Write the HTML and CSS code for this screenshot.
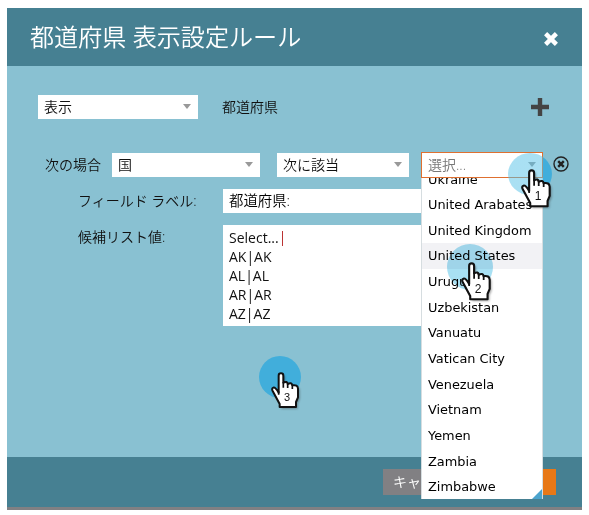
FILE: index.html
```html
<!DOCTYPE html>
<html lang="ja">
<head>
<meta charset="utf-8">
<title>都道府県 表示設定ルール</title>
<link rel="stylesheet" href="styles.css">
</head>
<body>
<svg class="defs" width="0" height="0">
  <symbol id="hand" viewBox="0 0 96 120">
    <path class="hand-shadow" d="M23 62V11Q23 4 30 4T37 11V32Q49 26 50 36Q62 30 64 40Q80 37 81 50V76L75 90V105H26V96L5 57Q1 49 7 47T23 62Z"/>
    <path class="hand-shape" d="M23 62V11Q23 4 30 4T37 11V32Q49 26 50 36Q62 30 64 40Q80 37 81 50V76L75 90V105H26V96L5 57Q1 49 7 47T23 62Z"/>
    <path class="hand-line" d="M23 58V68M37 30V47M50 34V48M64 39V51"/>
  </symbol>
</svg>
<main class="dialog">
  <header class="head">
    <h1>都道府県 表示設定ルール</h1>
    <svg class="close" viewBox="0 0 16 16"><path d="M2.6 2.6 13.4 13.4M13.4 2.6 2.6 13.4"/></svg>
  </header>
  <section class="body">
    <div class="row action">
      <div class="select show">表示<i></i></div>
      <span class="target">都道府県</span>
      <svg class="add" viewBox="0 0 18 18"><path d="M9 0V18M0 9H18"/></svg>
    </div>
    <div class="row condition">
      <span class="when">次の場合</span>
      <div class="select field">国<i></i></div>
      <div class="select operator">次に該当<i></i></div>
      <div class="select value">選択...<i></i></div>
      <svg class="remove" viewBox="0 0 16 16"><circle cx="8" cy="8" r="7"/><path d="M5.2 5.2 10.8 10.8M10.8 5.2 5.2 10.8"/></svg>
    </div>
    <div class="row label-row">
      <span class="caption">フィールド ラベル:</span>
      <div class="input">都道府県:</div>
    </div>
    <div class="row values-row">
      <span class="caption">候補リスト値:</span>
      <div class="textarea">Select...<b class="caret"></b><br>AK|AK<br>AL|AL<br>AR|AR<br>AZ|AZ</div>
    </div>
  </section>
  <footer class="foot">
    <div class="button cancel">キャンセル</div>
    <div class="button save"></div>
  </footer>
</main>
<div class="menu">
  <ul>
    <li>Ukraine</li><li>United Arabates</li><li>United Kingdom</li><li class="active">United States</li><li>Uruguay</li><li>Uzbekistan</li><li>Vanuatu</li><li>Vatican City</li><li>Venezuela</li><li>Vietnam</li><li>Yemen</li><li>Zambia</li><li>Zimbabwe</li>
  </ul>
</div>
<div class="halo halo-two"></div>
<div class="step one"><svg><use href="#hand"/></svg><span>1</span></div>
<div class="step two"><svg><use href="#hand"/></svg><span>2</span></div>
<div class="step three"><svg><use href="#hand"/></svg><span>3</span></div>
</body>
</html>
```
FILE: styles.css
```css
* { box-sizing: border-box; }
body {
  margin: 0;
  width: 589px;
  height: 515px;
  padding: 8px 7px 0;
  overflow: hidden;
  position: relative;
  background: #fff;
  color: #111;
  font: 350 14px/24px "Open Sans", "Noto Sans CJK JP", sans-serif;
}
.defs { position: absolute; }
.dialog {
  width: 575px;
  height: 502px;
  display: flex;
  flex-direction: column;
  background: #89c1d2;
  border-bottom: 3px solid #818083;
}
.head {
  height: 58px;
  display: flex;
  align-items: center;
  justify-content: space-between;
  padding: 0 23px;
  background: #468092;
}
h1 {
  margin: 0;
  color: #fff;
  font-size: 24.1px;
  font-weight: 350;
  line-height: 60px;
  white-space: nowrap;
}
.close { width: 16px; height: 16px; margin-top: 3px; }
.close path { stroke: #fff; stroke-width: 4.4; }
.body { flex: 1; padding-top: 29px; }
.row { display: flex; }
.action { height: 24px; padding-left: 31px; margin-bottom: 33px; }
.select {
  display: flex;
  justify-content: space-between;
  align-items: center;
  height: 24px;
  padding: 0 7px 0 6px;
  background: #fff;
  white-space: nowrap;
}
.select i {
  border: 4.5px solid transparent;
  border-top: 5px solid #999;
  border-bottom: 0;
  margin-bottom: 2px;
}
.show { width: 160px; }
.target { margin-left: 24px; }
.add { width: 18px; height: 18px; margin: 3px 33px 0 auto; }
.add path { stroke: #444; stroke-width: 4.4; }
.condition { height: 26px; padding-left: 38px; margin-bottom: 11px; align-items: center; }
.when { width: 67px; }
.field { width: 148px; margin-right: 17px; }
.operator { width: 132px; margin-right: 12px; }
.value { width: 122px; height: 26px; border: 1px solid #df7030; color: #777; padding-right: 6px; }
.remove { width: 16px; height: 16px; margin: -3px 0 0 10px; fill: none; stroke: #222; }
.remove circle { stroke-width: 1.4; }
.remove path { stroke-width: 2.4; }
.label-row { height: 24px; padding-left: 71px; margin-bottom: 12px; }
.values-row { padding-left: 71px; }
.caption { width: 145px; }
.input { width: 220px; padding-left: 6px; background: #fff; color: #000; font-size: 14.4px; }
.textarea {
  width: 220px;
  height: 101px;
  padding: 3px 6px;
  background: #fff;
  font-weight: 400;
  line-height: 19px;
}
.caret { display: inline-block; width: 1px; height: 15px; margin-left: 3px; background: #b33; vertical-align: -3px; }
.foot {
  height: 50px;
  display: flex;
  justify-content: flex-end;
  padding: 12px 26px 0 0;
  background: #468092;
}
.button { height: 26px; line-height: 26px; color: #fff; white-space: nowrap; }
.cancel { width: 88px; padding-left: 10px; background: #818083; }
.save { width: 75px; margin-left: 10px; background: #e77817; }
.menu {
  position: absolute;
  left: 421px;
  top: 178px;
  width: 122px;
  height: 321px;
  overflow: hidden;
  background: #fff;
  border: solid #d6dde0;
  border-width: 0 1px;
}
.menu::after {
  content: "";
  position: absolute;
  right: 0;
  bottom: 0;
  border: 5px solid transparent;
  border-right-color: #4ca4cd;
  border-bottom-color: #4ca4cd;
}
.menu ul { margin: -11.5px 0 0; padding: 0; list-style: none; }
.menu li {
  height: 25.65px;
  padding-left: 6px;
  color: #000;
  font: 12.9px/25.65px "DejaVu Sans", sans-serif;
  white-space: nowrap;
}
.menu .active { background: #f2f2f5; }
.halo {
  position: absolute;
  border-radius: 50%;
  background: #a8e0f3;
  mix-blend-mode: multiply;
}
.halo-two { left: 447px; top: 244px; width: 46px; height: 46px; }
.step { position: absolute; width: 46px; height: 46px; }
.step svg { position: absolute; left: 12px; top: 16px; width: 32px; height: 40px; overflow: visible; }
.step span {
  position: absolute;
  width: 12px;
  text-align: center;
  color: #111;
  font: 12px/14px "Liberation Sans", sans-serif;
}
.one::before, .three::before {
  content: "";
  position: absolute;
  left: 0;
  top: 0;
  width: 42px;
  height: 42px;
  border-radius: 50%;
  background: #41aedb;
}
.one { left: 508px; top: 153px; }
.one::before { width: 44px; background: linear-gradient(90deg, rgba(84, 193, 231, .5) 35px, #41aedb 35px); }
.one svg { left: 13px; top: 16px; width: 34px; height: 42.5px; }
.one span { left: 24px; top: 36px; }
.two { left: 447px; top: 244px; }
.two svg { left: 14px; top: 18px; width: 34px; height: 42.5px; }
.two span { left: 25px; top: 38px; }
.three { left: 259px; top: 356px; }
.three span { left: 22px; top: 34px; font-size: 11px; }
.hand-shadow { fill: #333; opacity: .45; transform: translate(5px, 5px); filter: blur(3px); }
.hand-shape { fill: #fff; stroke: #111; stroke-width: 6; stroke-linejoin: round; }
.hand-line { fill: none; stroke: #111; stroke-width: 5; }
```
